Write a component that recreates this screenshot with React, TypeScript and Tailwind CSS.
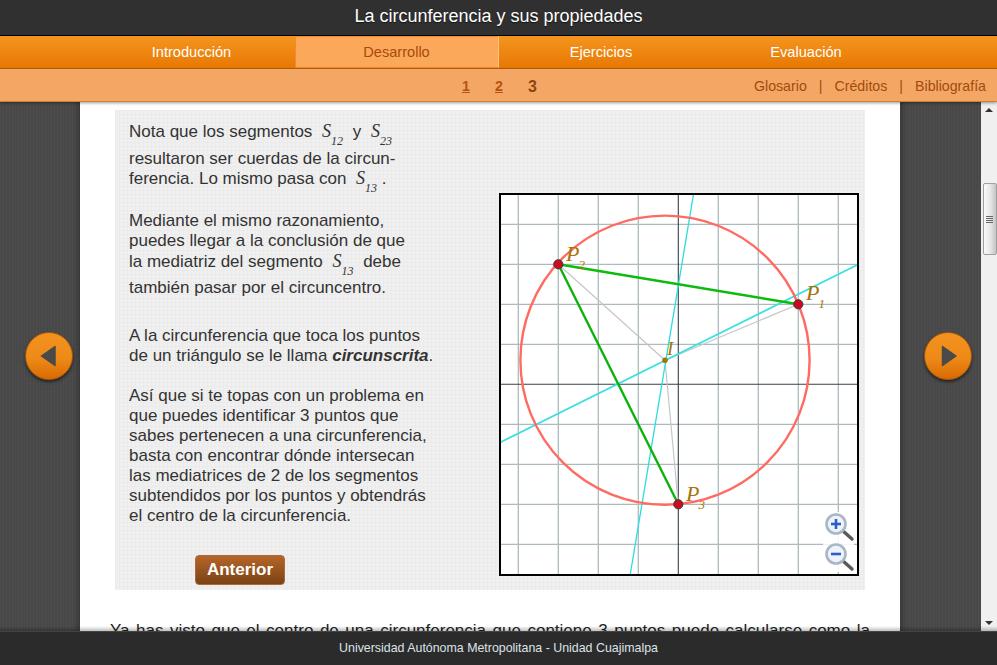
import { ReactNode } from "react";

function Seg({ n, className = "" }: { n: string; className?: string }) {
  return (
    <span className={`font-['Liberation_Serif',serif] italic leading-none text-[#333] ${className}`}>
      <span className="text-[18px]">S</span>
      <span className="text-[12px] align-[-8px]">{n}</span>
    </span>
  );
}

function Line({ children, className = "" }: { children: ReactNode; className?: string }) {
  return <div className={`h-5 leading-5 whitespace-nowrap ${className}`}>{children}</div>;
}

function ArrowButton({ dir }: { dir: "left" | "right" }) {
  return (
    <div className="w-12 h-12 rounded-full border border-[#a4540c] bg-[linear-gradient(#f2921f,#ee8a18_55%,#d96a02)] shadow-[0_2px_3px_rgba(0,0,0,0.55)] flex items-center justify-center">
      <svg width="24" height="24" viewBox="0 0 24 24">
        {dir === "left" ? (
          <path d="M4.5 12 L18 2.5 V21.5 Z" fill="#4a4a4a" stroke="#4a4a4a" strokeWidth="1.5" strokeLinejoin="round" />
        ) : (
          <path d="M20 12 L6.5 2.5 V21.5 Z" fill="#4a4a4a" stroke="#4a4a4a" strokeWidth="1.5" strokeLinejoin="round" />
        )}
      </svg>
    </div>
  );
}

function PointLabel({ x, y, sub }: { x: number; y: number; sub: string }) {
  return (
    <text x={x} y={y} fill="#a87408" fontFamily="'Liberation Serif', serif" fontStyle="italic" fontSize="22">
      P
      <tspan dx="-1" dy="8" fontSize="13">{sub}</tspan>
    </text>
  );
}

function Magnifier({ y, plus }: { y: number; plus: boolean }) {
  return (
    <g transform={`translate(824 ${y})`}>
      <rect x="-1" y="0" width="31" height="30" fill="#fff" fillOpacity="0.85" />
      <line x1="19" y1="19" x2="28" y2="27" stroke="#5a5a5a" strokeWidth="3.4" strokeLinecap="round" />
      <circle cx="12" cy="12" r="9.5" fill="#eef3fb" stroke="#a9b6c4" strokeWidth="2.6" />
      <line x1="7" y1="12" x2="17" y2="12" stroke="#2f5fc4" strokeWidth="2.6" />
      {plus && <line x1="12" y1="7" x2="12" y2="17" stroke="#2f5fc4" strokeWidth="2.6" />}
    </g>
  );
}

function Graph() {
  const vs = [518.3, 558.3, 598.3, 638.3, 718.3, 758.3, 798.3, 838.3];
  const hs = [224.3, 264.3, 304.3, 344.3, 424.3, 464.3, 504.3, 544.3];
  const pts = [
    [798.3, 304.3],
    [558.3, 264.3],
    [678.3, 504.3],
  ];
  const I = [665, 360.2];
  return (
    <div className="w-[360px] h-[383px] border-2 border-black bg-white shrink-0">
      <svg width="356" height="379" viewBox="501 195 356 379" className="block">
        {vs.map((x) => (
          <line key={x} x1={x} x2={x} y1="195" y2="574" stroke="#adbabd" strokeWidth="1.3" />
        ))}
        {hs.map((y) => (
          <line key={y} y1={y} y2={y} x1="501" x2="857" stroke="#adbabd" strokeWidth="1.3" />
        ))}
        <line x1="678.3" x2="678.3" y1="195" y2="574" stroke="#33434a" strokeWidth="1.1" />
        <line y1="384.3" y2="384.3" x1="501" x2="857" stroke="#33434a" strokeWidth="1.1" />
        {pts.map((p) => (
          <line key={p[0]} x1={I[0]} y1={I[1]} x2={p[0]} y2={p[1]} stroke="#c6c6c6" strokeWidth="1.2" />
        ))}
        <line x1="693.7" y1="193" x2="630" y2="576" stroke="#2cdce0" strokeWidth="1.3" />
        <line x1="857" y1="265" x2="500" y2="442.5" stroke="#3be0e2" strokeWidth="1.8" />
        <circle cx={I[0]} cy={I[1]} r="144.6" fill="none" stroke="#ff6b62" strokeWidth="2.4" />
        <line x1="558.3" y1="264.3" x2="798.3" y2="304.3" stroke="#0cbc0c" strokeWidth="2.4" />
        <line x1="558.3" y1="264.3" x2="678.3" y2="504.3" stroke="#0cb20c" strokeWidth="2.4" />
        {pts.map((p) => (
          <circle key={p[0]} cx={p[0]} cy={p[1]} r="4.6" fill="#cc0a24" stroke="#3b3b3b" strokeWidth="1" />
        ))}
        <circle cx={I[0]} cy={I[1]} r="2.8" fill="#a87408" />
        <PointLabel x={806} y={300} sub="1" />
        <PointLabel x={566} y={261} sub="2" />
        <PointLabel x={686} y={501} sub="3" />
        <text x="667" y="355" fill="#a87408" fontFamily="'Liberation Serif', serif" fontStyle="italic" fontSize="19">
          I
        </text>
        <Magnifier y={512} plus />
        <Magnifier y={542} plus={false} />
      </svg>
    </div>
  );
}

function Scrollbar() {
  return (
    <div className="w-4 shrink-0 bg-[#f0f0f0] flex flex-col items-center pt-[6px]">
      <div className="w-0 h-0 border-x-[4px] border-x-transparent border-b-[4px] border-b-[#333]" />
      <div className="mt-[71px] w-[14px] ml-[1px] h-[72px] rounded-[2px] border border-[#a0a0a0] bg-[linear-gradient(90deg,#fafafa,#e8e8e8_50%,#c4c4c4)] flex flex-col items-center justify-center gap-[1px]">
        <div className="w-[7px] h-px bg-[#666]" />
        <div className="w-[7px] h-px bg-[#666]" />
        <div className="w-[7px] h-px bg-[#666]" />
        <div className="w-[7px] h-px bg-[#666]" />
      </div>
      <div className="mt-auto mb-[6px] w-0 h-0 border-x-[4px] border-x-transparent border-t-[4px] border-t-[#333]" />
    </div>
  );
}

export default function App() {
  const gutter =
    "shrink-0 bg-[#4a4a4a] bg-[repeating-linear-gradient(90deg,rgba(255,255,255,0.025)_0_1px,transparent_1px_3px),repeating-linear-gradient(0deg,rgba(0,0,0,0.04)_0_1px,transparent_1px_2px)]";
  return (
    <div className="w-[997px] h-[665px] overflow-hidden flex flex-col font-['Liberation_Sans',Arial,sans-serif] bg-white">
      <header className="h-9 shrink-0 bg-[#303030] border-b border-black flex items-center justify-center pb-[2px] text-white text-[18px] [text-shadow:0_1px_1px_rgba(0,0,0,0.6)]">
        La circunferencia y sus propiedades
      </header>

      <nav className="h-[33px] shrink-0 bg-[linear-gradient(#f4951f,#e87802)] border-b border-[#bf6208] flex justify-center text-[14.6px] text-white">
        <a className="w-[206px] flex items-center justify-center pt-[2px]">Introducción</a>
        <a className="w-[204px] flex items-center justify-center pt-[2px] bg-[#fca85a] border border-[#f08c2c] border-r-[#fcc38a] text-[#a9490a]">
          Desarrollo
        </a>
        <a className="w-[205px] flex items-center justify-center pt-[2px]">Ejercicios</a>
        <a className="w-[205px] flex items-center justify-center pt-[2px]">Evaluación</a>
      </nav>

      <div className="h-[33px] shrink-0 relative z-10 bg-[#f4a764] border-b border-[#cf7f30] shadow-[0_1px_3px_rgba(0,0,0,0.4)] grid grid-cols-[1fr_auto_1fr] items-center pt-[3px] text-[14.2px]">
        <div />
        <div className="flex items-center gap-[24px] pl-[2px] font-bold text-[#b5520f]">
          <span className="underline w-[9px]">1</span>
          <span className="underline w-[9px]">2</span>
          <span className="text-base text-[#8a4510] w-[9px]">3</span>
        </div>
        <div className="flex justify-end items-center gap-[12px] pr-[11px] text-[#a34a10]">
          <span>Glosario</span>
          <span>|</span>
          <span>Créditos</span>
          <span>|</span>
          <span>Bibliografía</span>
        </div>
      </div>

      <main className="flex-1 min-h-0 flex relative overflow-hidden">
        <div className={`w-20 pt-[230px] pl-[25px] ${gutter} shadow-[inset_-6px_0_6px_-4px_rgba(0,0,0,0.3)]`}>
          <ArrowButton dir="left" />
        </div>

        <div className="w-[820px] shrink-0 bg-white pt-2 px-[35px] overflow-hidden">
          <section className="w-[750px] h-[480px] flex bg-[#f0f0f0] bg-[linear-gradient(#ebebeb_1px,transparent_1px),linear-gradient(90deg,#ebebeb_1px,transparent_1px)] bg-[size:4px_4px] text-[#333] text-[17px]">
            <div className="w-[384px] shrink-0 pl-[14px] pt-[12px]">
              <Line>
                Nota que los segmentos <Seg n="12" className="ml-[5px] mr-[5px]" /> y <Seg n="23" className="ml-[5px]" />
              </Line>
              <Line className="mt-[7px]">resultaron ser cuerdas de la circun-</Line>
              <Line>
                ferencia. Lo mismo pasa con <Seg n="13" className="ml-[5px]" /> .
              </Line>

              <Line className="mt-[22px]">Mediante el mismo razonamiento,</Line>
              <Line>puedes llegar a la conclusión de que</Line>
              <Line className="mt-[1px]">
                la mediatriz del segmento <Seg n="13" className="ml-[5px] mr-[5px]" /> debe
              </Line>
              <Line className="mt-[6px]">también pasar por el circuncentro.</Line>

              <Line className="mt-[28px]">A la circunferencia que toca los puntos</Line>
              <Line>
                de un triángulo se le llama <b className="italic">circunscrita</b>.
              </Line>

              <Line className="mt-5">Así que si te topas con un problema en</Line>
              <Line>que puedes identificar 3 puntos que</Line>
              <Line>sabes pertenecen a una circunferencia,</Line>
              <Line>basta con encontrar dónde intersecan</Line>
              <Line>las mediatrices de 2 de los segmentos</Line>
              <Line>subtendidos por los puntos y obtendrás</Line>
              <Line>el centro de la circunferencia.</Line>

              <button className="mt-[29px] ml-[66px] w-[90px] h-[30px] rounded-[4px] border border-[#a96a36] bg-[linear-gradient(#b5652a,#7a4315)] text-white font-bold text-[17px] block">
                Anterior
              </button>
            </div>
            <div className="pt-[83px]">
              <Graph />
            </div>
          </section>

          <p className="mt-[31px] mx-[-5px] text-[17px] leading-5 text-[#222] whitespace-nowrap text-justify [text-align-last:justify]">
            Ya has visto que el centro de una circunferencia que contiene 3 puntos puede calcularse como la
          </p>
        </div>

        <div className={`w-[81px] pt-[230px] pl-[24px] ${gutter} shadow-[inset_6px_0_6px_-4px_rgba(0,0,0,0.3)]`}>
          <ArrowButton dir="right" />
        </div>
        <Scrollbar />

        <div className="absolute left-0 right-0 bottom-0 h-[5px] bg-[linear-gradient(transparent,rgba(0,0,0,0.25))]" />
      </main>

      <footer className="h-[34px] shrink-0 bg-[#2b2b2b] border-t border-[#444] flex items-center justify-center text-[12.4px] text-[#dde3e8]">
        Universidad Autónoma Metropolitana - Unidad Cuajimalpa
      </footer>
    </div>
  );
}
